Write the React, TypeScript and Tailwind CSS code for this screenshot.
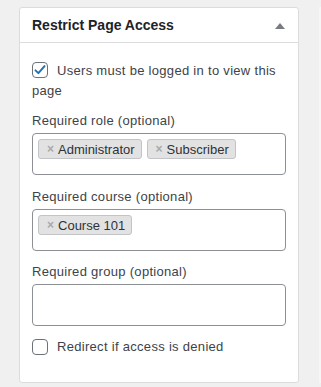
import { useState } from 'react';

const FONT = "font-['Liberation_Sans',Arial,sans-serif]";

function Tag({ label }: { label: string }) {
  return (
    <span className="flex h-[20px] items-center rounded-[3px] border border-[#c3c4c7] bg-[#e2e2e3] pl-[8px] pr-[6px] text-[13px] leading-none tracking-normal text-[#2c3338]">
      <span className="mr-[4px] text-[12px] font-bold text-[#a7aaad]">×</span>
      {label}
    </span>
  );
}

function TagSelect({ tags }: { tags: string[] }) {
  return (
    <div className="mt-[2px] flex h-[42px] items-start gap-[5px] rounded-[4px] border border-[#8c8f94] bg-white px-[5px] pt-[5px]">
      {tags.map((t) => (
        <Tag key={t} label={t} />
      ))}
    </div>
  );
}

function Checkbox({ checked }: { checked: boolean }) {
  return (
    <span className="inline-flex h-[16px] w-[16px] shrink-0 items-center justify-center rounded-[4px] border-[1.5px] border-[#6d7277] bg-white align-[-2px]">
      {checked && (
        <svg width="14" height="14" viewBox="0 0 20 20">
          <path d="M3.5 10.5l4.2 4L16.5 4.5" fill="none" stroke="#2271b1" strokeWidth="2.8" strokeLinecap="round" strokeLinejoin="round" />
        </svg>
      )}
    </span>
  );
}

export default function App() {
  const [open] = useState(true);

  return (
    <div className={`h-[387px] w-[321px] overflow-hidden bg-[#f0f0f1] pl-[19px] pt-[7px] ${FONT}`}>
      <div className="flex">
        <div className="w-[280px] rounded-[3px] border border-[#dcdcde] bg-white">
          {/* Header */}
          <div className="flex h-[35px] items-center justify-between border-b border-[#dcdcde] pl-[12px] pr-[13px]">
            <h2 className="text-[14px] font-semibold text-[#1d2327]">Restrict Page Access</h2>
            <svg width="10" height="6" viewBox="0 0 10 6" className="mt-[1px]">
              <path d="M5 0L10 6H0Z" fill="#787c82" />
            </svg>
          </div>

          {open && (
            <div className="px-[12px] pb-[25px] pt-[18px] text-[13px] leading-[20px] tracking-[0.3px] text-[#3c434a]">
              <label className="block">
                <Checkbox checked />
                <span className="ml-[9px]">Users must be logged in to view this page</span>
              </label>

              <div className="mt-[10px]">Required role (optional)</div>
              <TagSelect tags={['Administrator', 'Subscriber']} />

              <div className="mt-[12px]">Required course (optional)</div>
              <TagSelect tags={['Course 101']} />

              <div className="mt-[11px]">Required group (optional)</div>
              <TagSelect tags={[]} />

              <label className="mt-[11px] flex items-start gap-[9px]">
                <span className="mt-[2px] flex">
                  <Checkbox checked={false} />
                </span>
                <span>Redirect if access is denied</span>
              </label>
            </div>
          )}
        </div>
        <div className="ml-[20px] w-[2px] bg-[#f6f6f6]" />
      </div>
    </div>
  );
}
